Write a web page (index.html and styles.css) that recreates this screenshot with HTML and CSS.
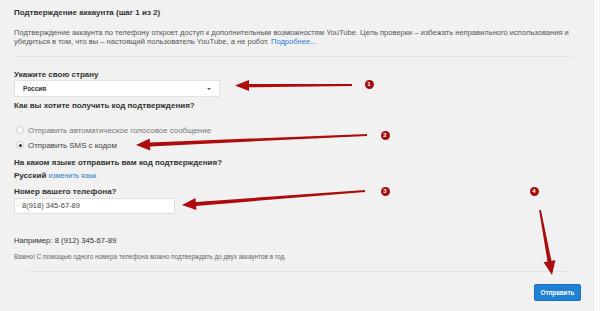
FILE: index.html
```html
<!DOCTYPE html>
<html lang="ru">
<head>
<meta charset="utf-8">
<title>Подтверждение аккаунта</title>
<link rel="stylesheet" href="styles.css">
</head>
<body>
<div class="page">
  <div class="panel">
    <h1 class="title">Подтверждение аккаунта (шаг 1 из 2)</h1>
    <p class="desc">Подтверждение аккаунта по телефону откроет доступ к дополнительным возможностям YouTube. Цель проверки – избежать неправильного использования и<br>убедиться в том, что вы – настоящий пользователь YouTube, а не робот. <a class="link" href="#">Подробнее...</a></p>
    <div class="rule"></div>

    <div class="label l-country">Укажите свою страну</div>
    <div class="select"><span class="select-text">Россия</span><span class="caret"></span></div>

    <div class="label l-method">Как вы хотите получить код подтверждения?</div>
    <div class="radios">
      <div class="radio-row muted"><span class="radio"></span><span>Отправить автоматическое голосовое сообщение</span></div>
      <div class="radio-row"><span class="radio checked"></span><span>Отправить SMS с кодом</span></div>
    </div>

    <div class="label l-lang">На каком языке отправить вам код подтверждения?</div>
    <div class="lang"><span class="lang-name">Русский</span> <a class="link small" href="#">изменить язык</a></div>

    <div class="label l-phone">Номер вашего телефона?</div>
    <div class="input">8(918) 345-67-89</div>

    <div class="example">Например: 8 (912) 345-67-89</div>
    <div class="note">Важно! С помощью одного номера телефона можно подтверждать до двух аккаунтов в год.</div>
    <div class="rule rule-bottom"></div>
    <div class="actions"><button class="btn">Отправить</button></div>
  </div>

  <svg class="arrows" width="600" height="311" viewBox="0 0 600 311" aria-hidden="true">
    <g fill="#ad0c0c">
      <polygon points="352,85.9 249,87.3 249,91 235,85.6 249,80 249,83.9 352,84.1"/>
      <polygon points="367.04,135.9 150.08,146.39 150.25,150.38 136,145 149.73,138.40 149.90,142.39 366.96,134.1"/>
      <polygon points="365.07,191.9 196.11,205.92 196.42,209.91 182,205 195.5,197.95 195.81,201.94 364.93,190.1"/>
      <polygon points="539.11,210.16 547.49,261.59 543.56,262.32 552,275 555.36,260.14 551.43,260.87 540.89,209.84"/>
    </g>
  </svg>
  <span class="badge b1">1</span>
  <span class="badge b2">2</span>
  <span class="badge b3">3</span>
  <span class="badge b4">4</span>
</div>
</body>
</html>
```
FILE: styles.css
```css
html, body {
  margin: 0;
  padding: 0;
}
body {
  background: #f9f9f9;
  font-family: "Liberation Sans", Arial, sans-serif;
  color: #333;
}
.page {
  position: relative;
  width: 593px;
  height: 311px;
  background: #f1f1f1;
  border-right: 1px solid #e8e8e8;
  overflow: hidden;
}
.panel {
  padding: 8px 12px 0 14px;
  display: flex;
  flex-direction: column;
}
.title {
  margin: 0;
  font-size: 8px;
  line-height: 10px;
  font-weight: bold;
  color: #333;
}
.desc {
  margin: 10px 0 0;
  font-size: 7.55px;
  line-height: 9px;
  color: #555;
  width: 567px;
  white-space: nowrap;
}
.link {
  color: #2b7bd2;
  text-decoration: none;
}
.link.small {
  font-size: 7px;
}
.rule {
  margin: 10px 9px 0 0;
  height: 1px;
  background: #e3e3e3;
}
.rule-bottom {
  margin: 10px 10px 0 14px;
}
.label {
  font-size: 8px;
  line-height: 10px;
  font-weight: bold;
  color: #333;
}
.l-country { margin-top: 13px; }
.l-method { margin-top: 4px; }
.l-lang { margin-top: 7px; }
.l-phone { margin-top: 6px; }
.select {
  box-sizing: border-box;
  width: 206px;
  height: 17px;
  background: #fff;
  border: 1px solid #e2e2e2;
  display: flex;
  align-items: center;
  justify-content: space-between;
  padding: 0 8px 0 8px;
}
.select-text {
  font-size: 6.5px;
  font-weight: bold;
  color: #333;
}
.caret {
  width: 0;
  height: 0;
  border-left: 2px solid transparent;
  border-right: 2px solid transparent;
  border-top: 2.5px solid #555;
}
.radios {
  margin-top: 13px;
  display: flex;
  flex-direction: column;
  gap: 3px;
}
.radio-row {
  height: 12px;
  display: flex;
  align-items: center;
  gap: 4px;
  font-size: 7.9px;
  color: #444;
}
.radio-row.muted {
  color: #777;
}
.radio {
  box-sizing: border-box;
  width: 8px;
  height: 8px;
  margin-left: 2px;
  border-radius: 50%;
  border: 1px solid #cfcfcf;
  background: #fafafa;
  display: flex;
  align-items: center;
  justify-content: center;
}
.radio.checked::after {
  content: "";
  width: 3px;
  height: 3px;
  border-radius: 50%;
  background: #333;
}
.lang {
  margin-top: 3px;
  font-size: 8px;
  line-height: 10px;
}
.lang-name {
  font-weight: bold;
  color: #333;
}
.input {
  box-sizing: border-box;
  margin-top: 1px;
  width: 161px;
  height: 16px;
  background: #fff;
  border: 1px solid #e0e0e0;
  padding-left: 7px;
  font-size: 7.5px;
  line-height: 14px;
  color: #444;
}
.example {
  margin-top: 22px;
  font-size: 7.7px;
  line-height: 10px;
  color: #333;
}
.note {
  margin-top: 7px;
  font-size: 6.4px;
  line-height: 8px;
  color: #666;
}
.actions {
  margin-top: 12px;
  display: flex;
  justify-content: flex-end;
}
.btn {
  box-sizing: border-box;
  width: 47px;
  height: 17px;
  border: 1px solid #1a6fbd;
  border-radius: 2px;
  background: #1f80d6;
  color: #fff;
  font-family: "Liberation Sans", Arial, sans-serif;
  font-size: 6.3px;
  font-weight: bold;
  padding: 0;
}
.arrows {
  position: absolute;
  left: 0;
  top: 0;
  pointer-events: none;
}
.badge {
  position: absolute;
  width: 9px;
  height: 9px;
  border-radius: 50%;
  background: #a50d0d;
  color: #fff;
  font-size: 6px;
  line-height: 9px;
  font-weight: bold;
  text-align: center;
}
.b1 { left: 364.5px; top: 79.5px; }
.b2 { left: 380.5px; top: 131px; }
.b3 { left: 380.5px; top: 186.5px; }
.b4 { left: 529.5px; top: 186.5px; }
```
